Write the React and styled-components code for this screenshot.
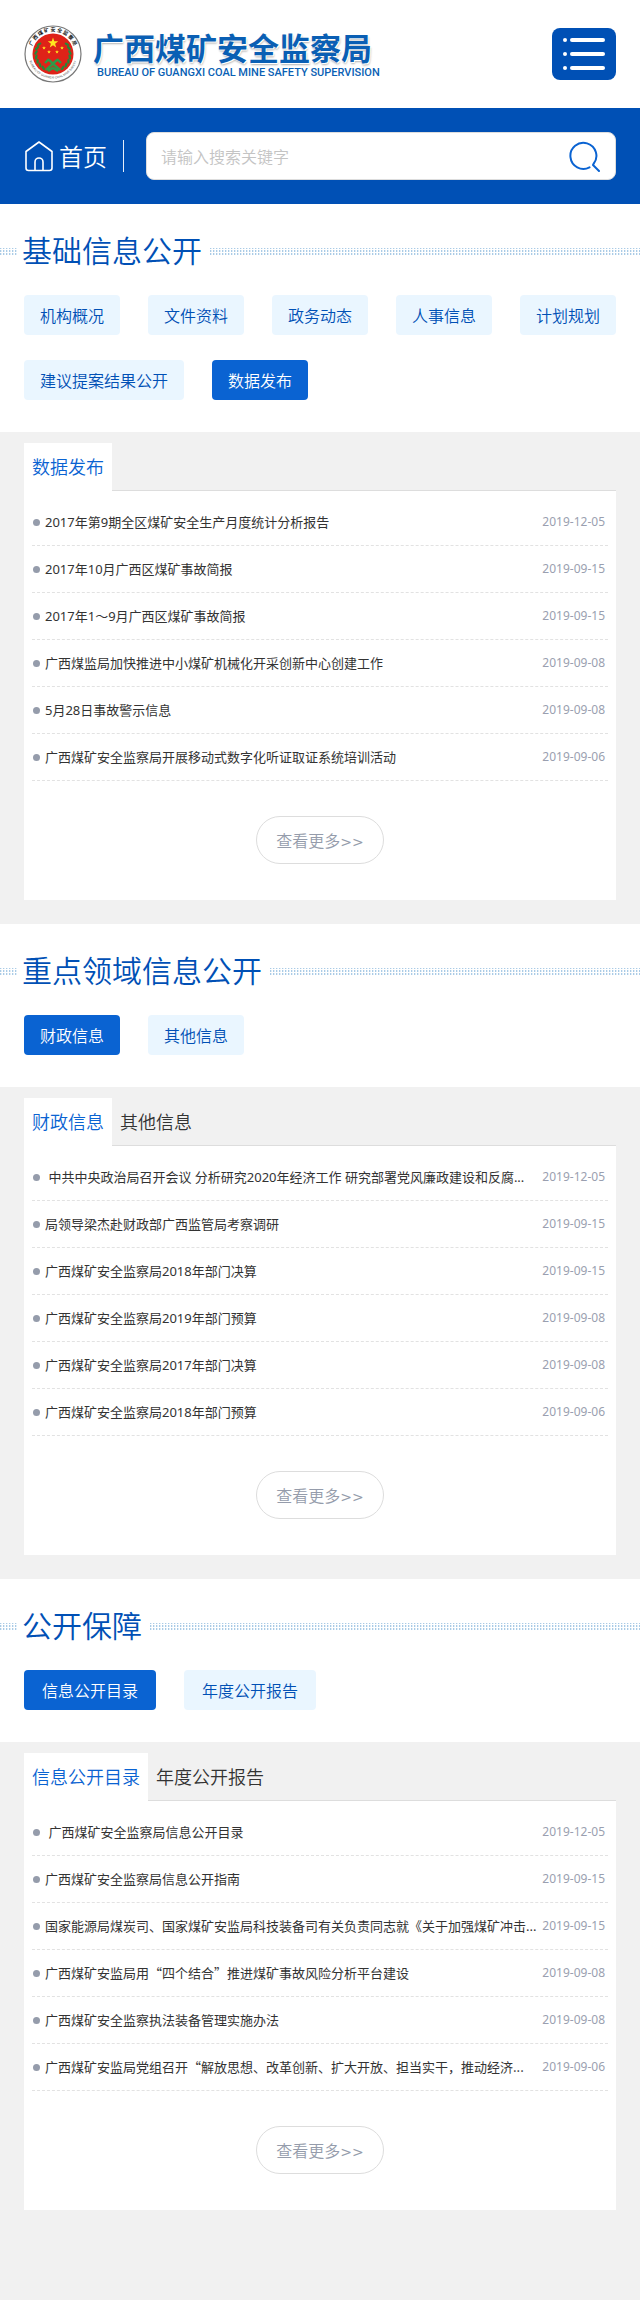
import React from "react";
import styled, { createGlobalStyle } from "styled-components";

const cjk = '"Noto Sans CJK SC", "Noto Sans", sans-serif';
const mixed = '"Noto Sans", "Noto Sans CJK SC", sans-serif';

const Global = createGlobalStyle`
  *, *::before, *::after { box-sizing: border-box; }
  body { margin: 0; background: #f1f1f1; font-family: ${cjk}; font-weight: 350; color: #333; }
  a { color: inherit; text-decoration: none; }
  h1, h2, p, ul { margin: 0; padding: 0; font-weight: inherit; }
  ul { list-style: none; }
  button, input { font: inherit; border: 0; padding: 0; margin: 0; }
  button { cursor: pointer; }
`;

const Header = styled.header`
  display: flex;
  align-items: center;
  justify-content: space-between;
  height: 108px;
  padding: 0 24px;
  background: #fff;
`;
const Brand = styled.a`
  display: flex;
  align-items: center;
  gap: 11px;
`;
const BrandText = styled.div`
  display: flex;
  flex-direction: column;
  color: #0a5fb4;
  white-space: nowrap;
`;
const BrandName = styled.h1`
  font-size: 31px;
  line-height: 38px;
  font-weight: 700;
  text-shadow: 1px 1px 0 #fff, 1px 2px 2px rgba(0, 0, 0, 0.3);
`;
const BrandLatin = styled.p`
  padding-left: 4px;
  font: 500 11px/14px Roboto, "Liberation Sans", sans-serif;
`;
const MenuButton = styled.button`
  width: 64px;
  height: 52px;
  border-radius: 8px;
  background: #0050b5;
`;

const SearchBar = styled.nav`
  display: flex;
  align-items: center;
  height: 96px;
  padding: 0 24px;
  background: #0050b5;
`;
const Home = styled.a`
  display: flex;
  align-items: center;
  gap: 4px;
  height: 32px;
  padding-right: 16px;
  margin-right: 22px;
  border-right: 1px solid #e6eefa;
  color: #fff;
  font-size: 24px;
  line-height: 32px;
`;
const SearchForm = styled.form`
  flex: 1;
  display: flex;
  align-items: center;
  height: 48px;
  padding: 0 14px;
  border: 1px solid #ddd;
  border-radius: 8px;
  background: #fff;
`;
const SearchInput = styled.input`
  flex: 1;
  min-width: 0;
  height: 40px;
  outline: 0;
  background: none;
  font-size: 16px;
  &::placeholder { color: #c4c4c4; opacity: 1; }
`;
const SearchButton = styled.button`
  display: flex;
  background: none;
`;

const Intro = styled.div`
  padding: 24px 0 32px;
  background: #fff;
`;
const Heading = styled.h2`
  display: flex;
  align-items: center;
  gap: 8px;
  height: 42px;
  margin-bottom: 25px;
  color: #0050b5;
  font-size: 30px;
  white-space: nowrap;
  &::before, &::after {
    content: "";
    height: 8px;
    margin-top: 6px;
    background:
      repeating-linear-gradient(0deg, #fff 0 1px, transparent 1px 3px),
      repeating-linear-gradient(90deg, #aacbe6 0 1px, #e2eef7 1px 2px, #fff 2px 3px);
  }
  &::before { width: 17px; margin-right: -3px; }
  &::after { flex: 1; }
`;
const Chips = styled.div`
  display: flex;
  flex-wrap: wrap;
  gap: 25px 28px;
  padding: 0 20px 0 24px;
`;
const Chip = styled.a`
  height: 40px;
  padding: 0 ${(p) => (p.$roomy ? 18 : 16)}px;
  border-radius: 4px;
  background: ${(p) => (p.$active ? "#0a63d2" : "#eaf6ff")};
  color: ${(p) => (p.$active ? "#fff" : "#0050b5")};
  font-size: 16px;
  line-height: 40px;
`;

const Band = styled.div`
  padding: 11px 24px 24px;
  background: #f1f1f1;
`;
const Tabs = styled.div`
  display: flex;
  height: 48px;
  border-bottom: 1px solid #ddd;
`;
const Tab = styled.button`
  height: 48px;
  padding: 0 8px 2px;
  background: ${(p) => (p.$active ? "#fff" : "transparent")};
  color: ${(p) => (p.$active ? "#0a63d2" : "#333")};
  font-size: 18px;
  line-height: 46px;
`;
const Panel = styled.div`
  padding: 8px 8px 36px;
  background: #fff;
`;
const Row = styled.li`
  display: flex;
  align-items: center;
  height: 47px;
  padding: 0 3px 0 1px;
  border-bottom: 1px dashed #e2e2e2;
  &::before {
    content: "";
    flex: none;
    width: 7px;
    height: 7px;
    margin-right: 5px;
    border-radius: 50%;
    background: #959cab;
  }
`;
const RowLink = styled.a`
  flex: 1;
  min-width: 0;
  font-family: ${(p) => (p.$quoted ? cjk : mixed)};
  font-size: 13px;
  font-weight: 400;
  line-height: 20px;
  white-space: pre;
`;
const RowDate = styled.time`
  color: #9a9fb0;
  font: 12px/20px ${mixed};
`;
const More = styled.a`
  display: block;
  width: 128px;
  height: 48px;
  margin: 35px auto 0;
  border: 1px solid #ddd;
  border-radius: 24px;
  color: #959cab;
  font-size: 16px;
  line-height: 46px;
  text-align: center;
`;
const Arrows = styled.span`
  font: 14px/16px "DejaVu Sans", sans-serif;
`;

const dates = ["2019-12-05", "2019-09-15", "2019-09-15", "2019-09-08", "2019-09-08", "2019-09-06"];

const sections = [
  {
    title: "基础信息公开",
    chips: ["机构概况", "文件资料", "政务动态", "人事信息", "计划规划", "建议提案结果公开", "数据发布"],
    active: "数据发布",
    tabs: ["数据发布"],
    items: [
      "2017年第9期全区煤矿安全生产月度统计分析报告",
      "2017年10月广西区煤矿事故简报",
      "2017年1\uff5e9月广西区煤矿事故简报",
      "广西煤监局加快推进中小煤矿机械化开采创新中心创建工作",
      "5月28日事故警示信息",
      "广西煤矿安全监察局开展移动式数字化听证取证系统培训活动",
    ],
  },
  {
    title: "重点领域信息公开",
    chips: ["财政信息", "其他信息"],
    active: "财政信息",
    tabs: ["财政信息", "其他信息"],
    items: [
      " 中共中央政治局召开会议 分析研究2020年经济工作 研究部署党风廉政建设和反腐...",
      "局领导梁杰赴财政部广西监管局考察调研",
      "广西煤矿安全监察局2018年部门决算",
      "广西煤矿安全监察局2019年部门预算",
      "广西煤矿安全监察局2017年部门决算",
      "广西煤矿安全监察局2018年部门预算",
    ],
  },
  {
    title: "公开保障",
    roomy: true,
    chips: ["信息公开目录", "年度公开报告"],
    active: "信息公开目录",
    tabs: ["信息公开目录", "年度公开报告"],
    items: [
      " 广西煤矿安全监察局信息公开目录",
      "广西煤矿安全监察局信息公开指南",
      "国家能源局煤炭司、国家煤矿安监局科技装备司有关负责同志就《关于加强煤矿冲击...",
      "广西煤矿安监局用“四个结合”推进煤矿事故风险分析平台建设",
      "广西煤矿安全监察执法装备管理实施办法",
      "广西煤矿安监局党组召开“解放思想、改革创新、扩大开放、担当实干，推动经济...",
    ],
  },
];

const star = (cx, cy, r) =>
  Array.from({ length: 10 }, (_, i) => {
    const a = (Math.PI * i) / 5 - Math.PI / 2;
    const d = i % 2 ? r * 0.4 : r;
    return `${cx + d * Math.cos(a)},${cy + d * Math.sin(a)}`;
  }).join(" ");

const leafAngles = [-35, -20, -5, 10, 25, 40, 55];

function Emblem() {
  return (
    <svg width="58" height="58" viewBox="0 0 58 58" aria-hidden="true">
      <defs>
        <path id="arcTop" d="M7.500 33A22 22 0 1 1 50.500 33" />
        <path id="arcLow" d="M4.500 29A24.500 24.500 0 0 0 53.500 29" />
      </defs>
      <circle cx="29" cy="29" r="28" fill="#fff" stroke="#777" strokeWidth="1.200" />
      <circle cx="29" cy="29" r="20.500" fill="#df2218" />
      <g fill="#238a3a">
        {leafAngles.map((a) => (
          <g key={a}>
            <ellipse cx="46" cy="29" rx="1.200" ry="2.600" transform={`rotate(${a} 29 29) rotate(-25 46 29)`} />
            <ellipse cx="12" cy="29" rx="1.200" ry="2.600" transform={`rotate(${-a} 29 29) rotate(25 12 29)`} />
          </g>
        ))}
      </g>
      <g stroke="#2f9a48" strokeWidth="2.400" fill="none">
        <path d="M22 45L33 35M36 45L25 35M21 38l4-4M37 38l-4-4M24 46l5-3 5 3" />
      </g>
      <g fill="#ffe51f">
        <polygon points={star(29, 18, 5.5)} />
        <polygon points={star(20, 23, 2)} />
        <polygon points={star(38, 23, 2)} />
        <polygon points={star(25, 27, 2)} />
        <polygon points={star(33, 27, 2)} />
      </g>
      <text fontSize="5" fontWeight="bold" fill="#111">
        <textPath href="#arcTop" startOffset="50%" textAnchor="middle">广 西 煤 矿 安 全 监 察 局</textPath>
      </text>
      <text fontSize="3" fill="#444" fontFamily="Liberation Sans">
        <textPath href="#arcLow" startOffset="50%" textAnchor="middle">BUREAU OF GUANGXI COAL MINE SAFETY</textPath>
      </text>
    </svg>
  );
}

function MenuIcon() {
  return (
    <svg width="64" height="52" viewBox="0 0 64 52" fill="#fff" aria-hidden="true">
      {[12, 26, 40].map((y) => (
        <g key={y}>
          <circle cx="13" cy={y} r="2" />
          <rect x="18" y={y - 2} width="35" height="4" rx="2" />
        </g>
      ))}
    </svg>
  );
}

function HomeIcon() {
  return (
    <svg width="31" height="32" viewBox="0 0 31 32" fill="none" stroke="#fff" strokeWidth="1.600" strokeLinejoin="round" aria-hidden="true">
      <path d="M2 11.500L15 2L28 11.500V28Q28 30.500 25.500 30.500H4.500Q2 30.500 2 28Z" />
      <path d="M11 30V22a4 4 0 0 1 8 0v8" />
    </svg>
  );
}

function SearchIcon() {
  return (
    <svg width="32" height="32" viewBox="0 0 32 32" fill="none" stroke="#0a63d2" strokeWidth="2" strokeLinecap="round" strokeLinejoin="round" aria-hidden="true">
      <path d="M20.500 27.300A13 13 0 1 1 24.500 24L24 25L30 31" />
    </svg>
  );
}

function Section({ title, roomy, chips, active, tabs, items }) {
  return (
    <section>
      <Intro>
        <Heading>{title}</Heading>
        <Chips>
          {chips.map((c) => (
            <Chip key={c} href="#" $active={c === active} $roomy={roomy}>{c}</Chip>
          ))}
        </Chips>
      </Intro>
      <Band>
        <Tabs>
          {tabs.map((t, i) => (
            <Tab key={t} type="button" $active={i === 0}>{t}</Tab>
          ))}
        </Tabs>
        <Panel>
          <ul>
            {items.map((text, i) => (
              <Row key={text}>
                <RowLink href="#" $quoted={text.includes("“")}>{text}</RowLink>
                <RowDate dateTime={dates[i]}>{dates[i]}</RowDate>
              </Row>
            ))}
          </ul>
          <More href="#">查看更多<Arrows>&gt;&gt;</Arrows></More>
        </Panel>
      </Band>
    </section>
  );
}

export default function App() {
  return (
    <>
      <Global />
      <Header>
        <Brand href="#">
          <Emblem />
          <BrandText>
            <BrandName>广西煤矿安全监察局</BrandName>
            <BrandLatin>BUREAU OF GUANGXI COAL MINE SAFETY SUPERVISION</BrandLatin>
          </BrandText>
        </Brand>
        <MenuButton type="button" aria-label="菜单"><MenuIcon /></MenuButton>
      </Header>
      <SearchBar>
        <Home href="#"><HomeIcon />首页</Home>
        <SearchForm role="search">
          <SearchInput type="text" aria-label="搜索" placeholder="请输入搜索关键字" />
          <SearchButton type="button" aria-label="搜索"><SearchIcon /></SearchButton>
        </SearchForm>
      </SearchBar>
      <main>
        {sections.map((s) => (
          <Section key={s.title} {...s} />
        ))}
      </main>
    </>
  );
}
